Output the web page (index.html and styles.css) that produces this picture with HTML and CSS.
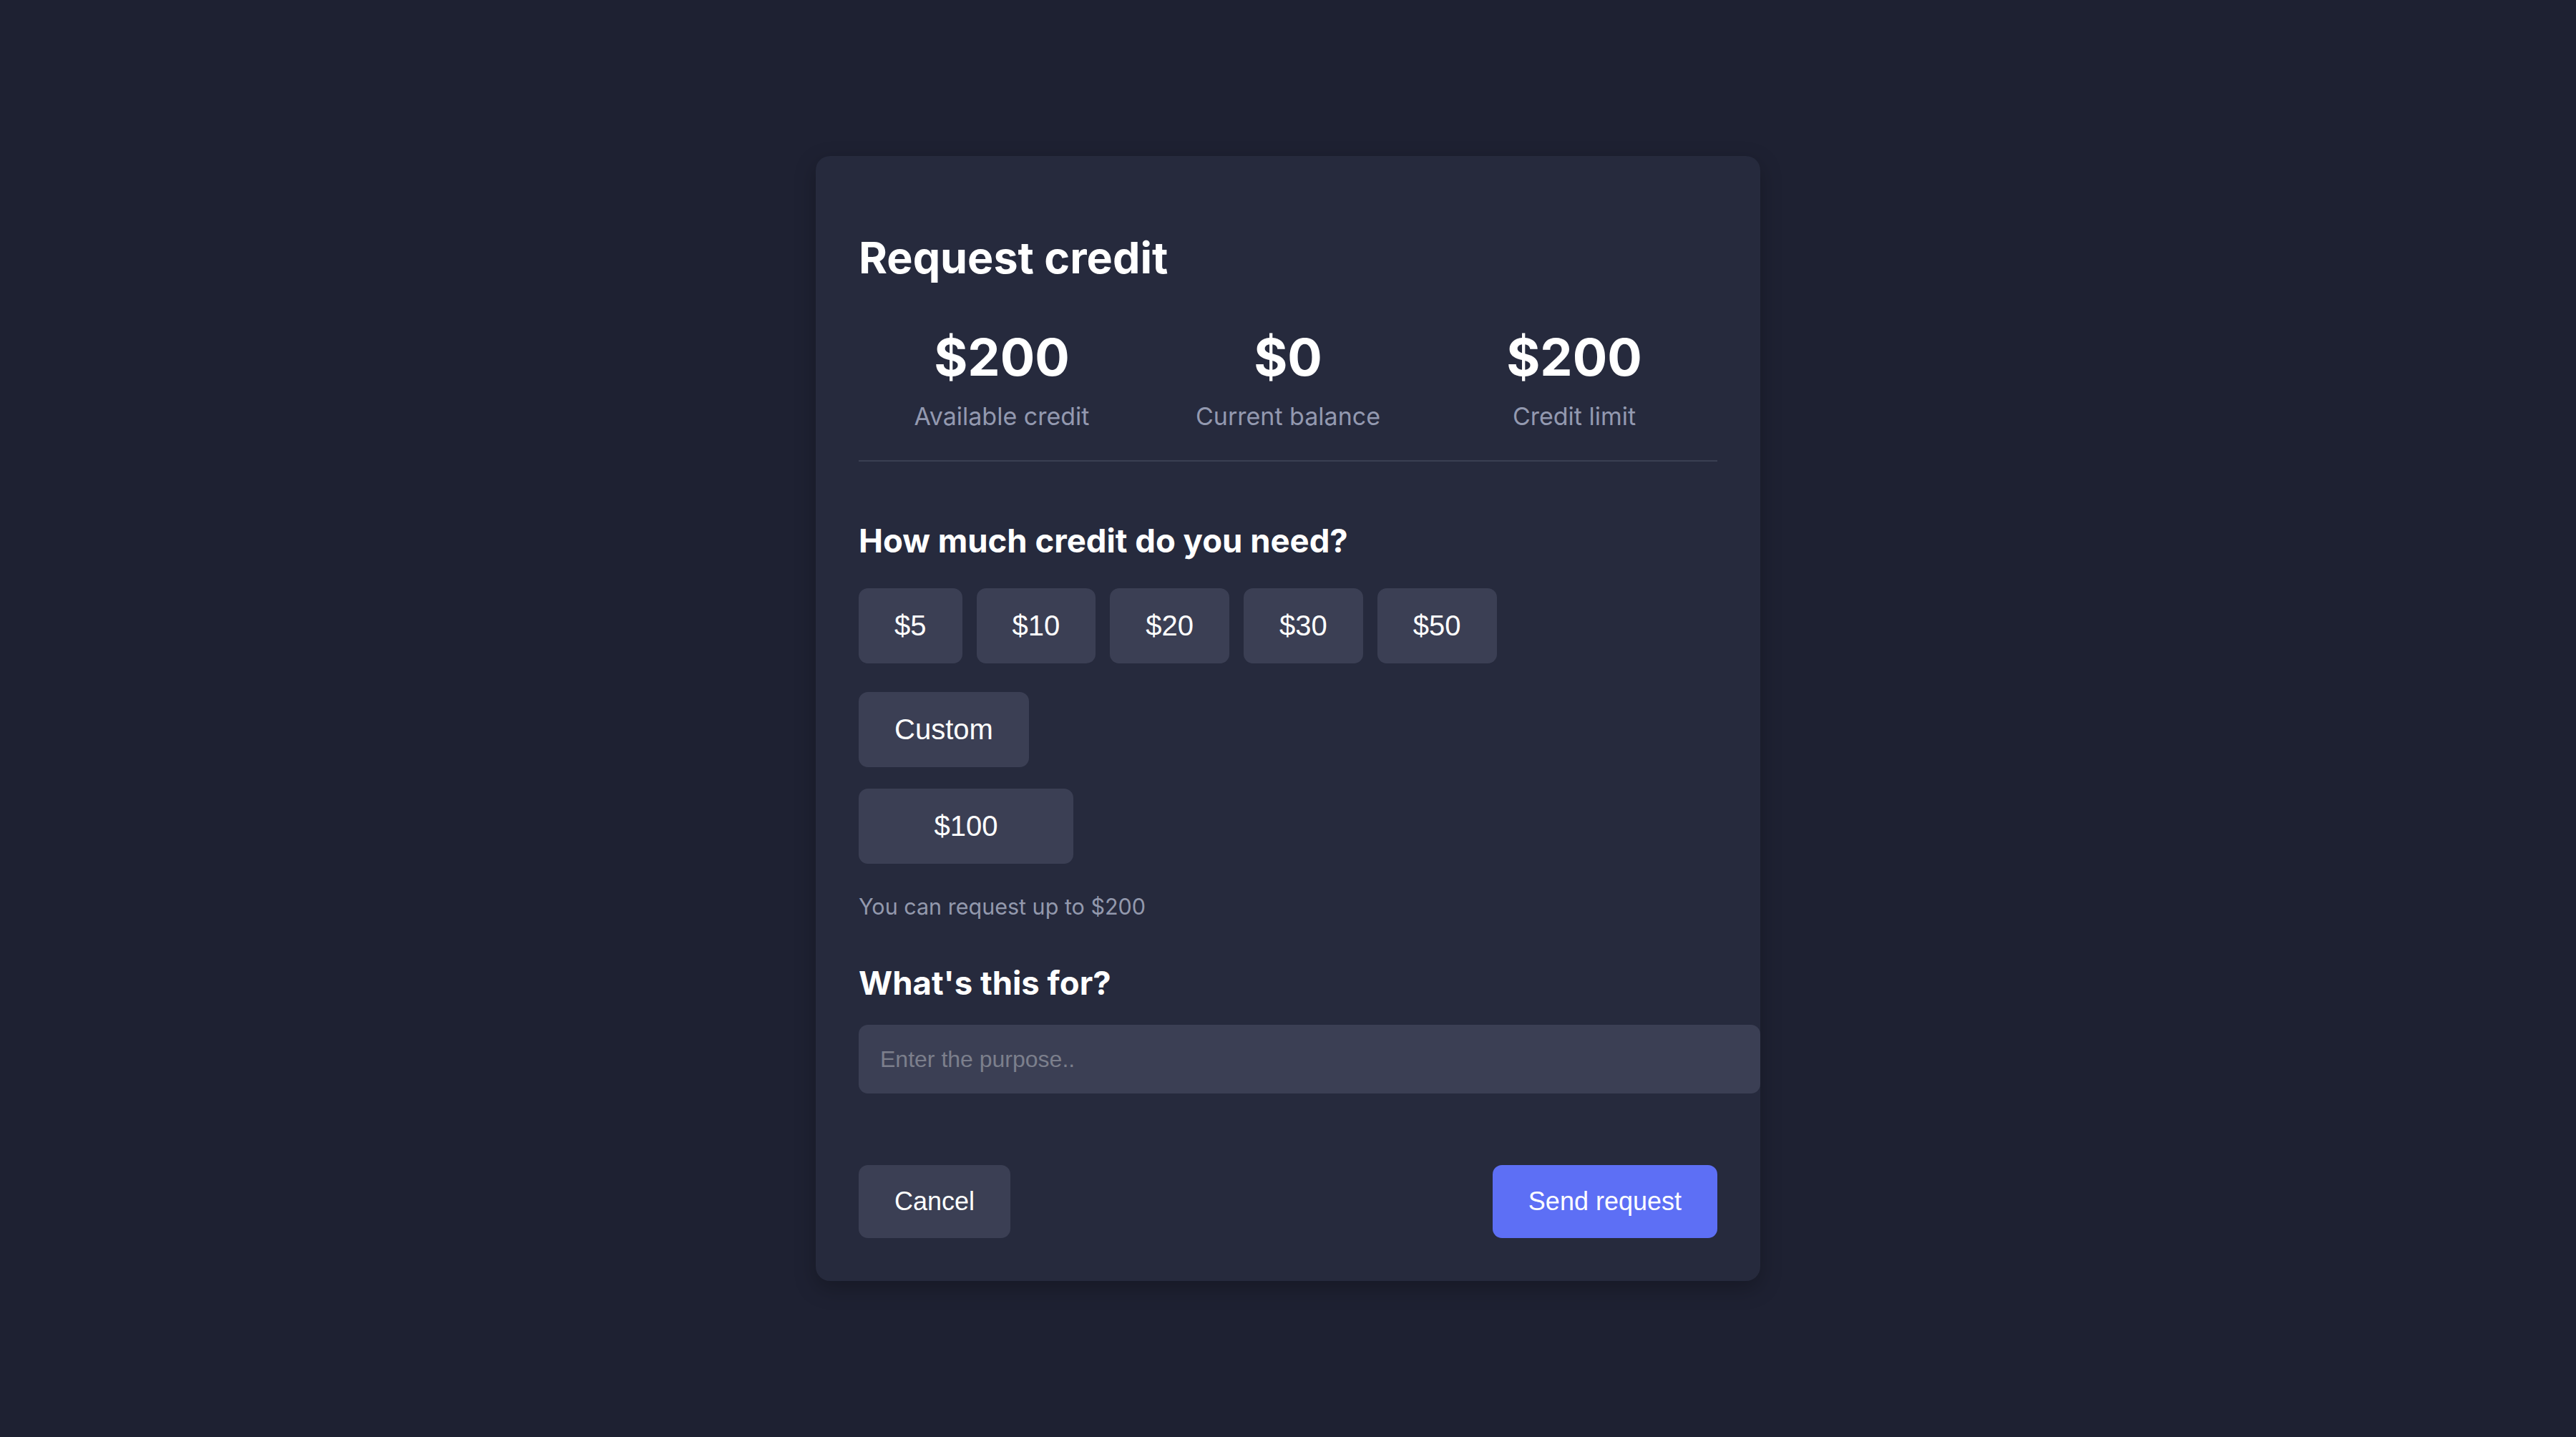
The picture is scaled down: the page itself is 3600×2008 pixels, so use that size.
FILE: index.html
```html
<!DOCTYPE html>
<html lang="en">
<head>
<meta charset="utf-8">
<title>Request credit</title>
<link rel="stylesheet" href="styles.css">
</head>
<body>
<main class="card">
  <h1 class="title">Request credit</h1>

  <section class="stats">
    <div class="stat">
      <div class="stat-value">$200</div>
      <div class="stat-label">Available credit</div>
    </div>
    <div class="stat">
      <div class="stat-value">$0</div>
      <div class="stat-label">Current balance</div>
    </div>
    <div class="stat">
      <div class="stat-value">$200</div>
      <div class="stat-label">Credit limit</div>
    </div>
  </section>

  <h2 class="section-title amount-title">How much credit do you need?</h2>
  <div class="amounts">
    <button class="chip">$5</button>
    <button class="chip">$10</button>
    <button class="chip">$20</button>
    <button class="chip">$30</button>
    <button class="chip">$50</button>
  </div>
  <div class="custom-row">
    <button class="chip">Custom</button>
  </div>
  <input class="amount-input" type="text" value="$100">
  <p class="hint">You can request up to $200</p>

  <h2 class="section-title purpose-title">What's this for?</h2>
  <input class="purpose-input" type="text" placeholder="Enter the purpose..">

  <div class="actions">
    <button class="btn btn-secondary">Cancel</button>
    <button class="btn btn-primary">Send request</button>
  </div>
</main>
</body>
</html>
```

FILE: styles.css
```css
html, body {
  margin: 0;
  padding: 0;
}

body {
  min-height: 100vh;
  display: flex;
  align-items: center;
  justify-content: center;
  background: #1e2132;
  font-family: Inter, "Noto Sans", sans-serif;
  color: #ffffff;
}

.card {
  width: 1200px;
  padding: 60px;
  background: #262a3d;
  border-radius: 20px;
  box-shadow: 0 10px 30px rgba(0, 0, 0, 0.25);
}

.title {
  margin: 46px 0 0;
  font-size: 61px;
  line-height: 72px;
  font-weight: 700;
}

/* summary figures */
.stats {
  display: grid;
  grid-template-columns: repeat(3, 1fr);
  margin-top: 60px;
  padding-bottom: 41px;
  border-bottom: 2px solid #3a3f52;
}

.stat {
  display: flex;
  flex-direction: column;
  align-items: center;
}

.stat-value {
  font-size: 72px;
  line-height: 86px;
  font-weight: 700;
}

.stat-label {
  margin-top: 20px;
  font-size: 34px;
  line-height: 40px;
  color: #9399b0;
}

.section-title {
  margin: 0;
  font-size: 45.5px;
  line-height: 54px;
  font-weight: 700;
}

.amount-title {
  margin-top: 84px;
}

.purpose-title {
  margin-top: 60px;
}

/* amount choices */
.amounts {
  display: flex;
  gap: 20px;
  margin-top: 39px;
}

.custom-row {
  display: flex;
  margin-top: 40px;
}

.chip {
  padding: 30px 50px;
  border: none;
  border-radius: 13px;
  background: #3b3f54;
  color: #ffffff;
  font-family: "Liberation Sans", Arial, sans-serif;
  font-size: 40px;
  line-height: 45px;
}

.amount-input {
  display: block;
  box-sizing: border-box;
  width: 300px;
  margin-top: 30px;
  padding: 30px 20px;
  border: none;
  border-radius: 13px;
  background: #3b3f54;
  color: #ffffff;
  font-family: "Liberation Sans", Arial, sans-serif;
  font-size: 40px;
  line-height: 45px;
  text-align: center;
  outline: none;
}

.hint {
  margin: 40px 0 0;
  font-size: 30.5px;
  line-height: 40px;
  color: #9399ad;
}

.purpose-input {
  display: block;
  box-sizing: content-box;
  width: 100%;
  margin-top: 31px;
  padding: 30px;
  border: none;
  border-radius: 13px;
  background: #3b3f54;
  color: #ffffff;
  font-family: "Liberation Sans", Arial, sans-serif;
  font-size: 32px;
  line-height: 36px;
  outline: none;
}

.purpose-input::placeholder {
  color: #7c7f8c;
}

/* footer buttons */
.actions {
  display: flex;
  justify-content: space-between;
  margin-top: 100px;
}

.btn {
  padding: 30px 50px;
  border: none;
  border-radius: 13px;
  color: #ffffff;
  font-family: "Liberation Sans", Arial, sans-serif;
  font-size: 36px;
  line-height: 42px;
}

.btn-secondary {
  background: #3b3f54;
}

.btn-primary {
  background: #5d6ff5;
}
```
